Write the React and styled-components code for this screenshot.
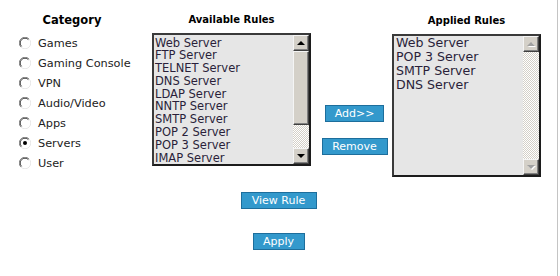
import React, { useState } from 'react';
import styled, { createGlobalStyle } from 'styled-components';

const GlobalStyle = createGlobalStyle`
  html, body {
    margin: 0;
    padding: 0;
    background: #fff;
  }
  body {
    font-family: "DejaVu Sans", Verdana, sans-serif;
    color: #222;
  }
`;

const Page = styled.div`
  width: 558px;
  height: 276px;
  box-sizing: border-box;
  border-right: 1px solid #c4c4c4;
`;

const TopRow = styled.div`
  display: flex;
  align-items: flex-start;
`;

const Column = styled.div`
  width: ${p => p.$width}px;
  margin-left: ${p => p.$left || 0}px;
  margin-top: ${p => p.$top || 0}px;
`;

const Header = styled.div`
  padding-top: 13px;
  height: 20px;
  line-height: 14px;
  text-align: center;
  font-weight: bold;
  font-size: ${p => p.$size}px;
  color: #000;
`;

const RadioList = styled.div`
  display: flex;
  flex-direction: column;
  padding-left: 19px;
`;

const RadioRow = styled.label`
  display: flex;
  align-items: center;
  gap: 7px;
  height: 20px;
  font-size: 11.3px;
  color: #222;
  cursor: pointer;
`;

const RadioIcon = ({ checked }) => (
  <svg width="12" height="12" viewBox="0 0 12 12">
    <circle cx="6" cy="6" r="5.5" fill="#fff" />
    <path d="M1.9 10.1 A5.5 5.5 0 0 1 10.1 1.9" fill="none" stroke="#8a8a8a" strokeWidth="1" />
    <path d="M2.6 9.4 A4.5 4.5 0 0 1 9.4 2.6" fill="none" stroke="#404040" strokeWidth="1" />
    <path d="M10.1 1.9 A5.5 5.5 0 0 1 1.9 10.1" fill="none" stroke="#e8e8e8" strokeWidth="1" />
    {checked && <circle cx="6" cy="6" r="2" fill="#000" />}
  </svg>
);

const ListBox = styled.div`
  display: flex;
  height: ${p => p.$height}px;
  box-sizing: border-box;
  border: 2px solid;
  border-color: #3a3a3a #1c1c1c #1c1c1c #3a3a3a;
  background: #e6e6e6;
`;

const Items = styled.div`
  flex: 1;
  overflow: hidden;
  padding: ${p => p.$pad};
  font-size: ${p => p.$size}px;
  line-height: ${p => p.$line}px;
  color: #2a1f3a;
  white-space: nowrap;
`;

const ScrollBar = styled.div`
  width: 16px;
  display: flex;
  flex-direction: column;
  background: repeating-conic-gradient(#d4d0c8 0 25%, #fff 0 50%) 0 0 / 2px 2px;
`;

const ScrollButton = styled.div`
  height: 16px;
  box-sizing: border-box;
  display: flex;
  align-items: center;
  justify-content: center;
  background: #d4d0c8;
  border: 1px solid;
  border-color: #f4f4f4 #404040 #404040 #f4f4f4;
  box-shadow: inset -1px -1px 0 #808080;
`;

const Thumb = styled.div`
  height: ${p => p.$height}px;
  box-sizing: border-box;
  background: #d4d0c8;
  border: 1px solid;
  border-color: #f4f4f4 #404040 #404040 #f4f4f4;
  box-shadow: inset -1px -1px 0 #808080;
`;

const Arrow = styled.span`
  width: 0;
  height: 0;
  border-left: 4px solid transparent;
  border-right: 4px solid transparent;
  ${p => (p.$down ? 'border-top' : 'border-bottom')}: 4px solid ${p => (p.$disabled ? '#a0a0a0' : '#000')};
  filter: ${p => (p.$disabled ? 'drop-shadow(1px 1px 0 #fff)' : 'none')};
`;

const Spacer = styled.div`
  flex: 1;
`;

const Middle = styled.div`
  width: 81px;
  padding-top: 105px;
  padding-left: 6px;
  box-sizing: border-box;
  display: flex;
  flex-direction: column;
  align-items: center;
  gap: 16px;
`;

const Button = styled.button`
  width: ${p => p.$width}px;
  height: 17px;
  padding: 0;
  box-sizing: border-box;
  border: 1px solid #1d6e9c;
  background: #3399cc;
  color: #fff;
  font-family: "DejaVu Sans", Verdana, sans-serif;
  font-size: 11px;
  line-height: 15px;
  cursor: pointer;
`;

const CenterRow = styled.div`
  display: flex;
  justify-content: center;
  margin-top: ${p => p.$top}px;
`;

const categories = ['Games', 'Gaming Console', 'VPN', 'Audio/Video', 'Apps', 'Servers', 'User'];

const available = [
  'Web Server', 'FTP Server', 'TELNET Server', 'DNS Server', 'LDAP Server', 'NNTP Server',
  'SMTP Server', 'POP 2 Server', 'POP 3 Server', 'IMAP Server',
];

const applied = ['Web Server', 'POP 3 Server', 'SMTP Server', 'DNS Server'];

export default function App() {
  const [category, setCategory] = useState('Servers');

  return (
    <Page>
      <GlobalStyle />
      <TopRow>
        <Column $width={144}>
          <Header $size={11.5}>Category</Header>
          <RadioList>
            {categories.map(c => (
              <RadioRow key={c} onClick={() => setCategory(c)}>
                <RadioIcon checked={category === c} />
                {c}
              </RadioRow>
            ))}
          </RadioList>
        </Column>

        <Column $width={159} $left={8}>
          <Header $size={10}>Available Rules</Header>
          <ListBox $height={133}>
            <Items $size={11.5} $line={12.8} $pad="1.5px 0 0 1px">
              {available.map(r => <div key={r}>{r}</div>)}
            </Items>
            <ScrollBar>
              <ScrollButton><Arrow /></ScrollButton>
              <Thumb $height={74} />
              <Spacer />
              <ScrollButton><Arrow $down /></ScrollButton>
            </ScrollBar>
          </ListBox>
        </Column>

        <Middle>
          <Button $width={59}>Add&gt;&gt;</Button>
          <Button $width={66}>Remove</Button>
        </Middle>

        <Column $width={149} $top={1}>
          <Header $size={10}>Applied Rules</Header>
          <ListBox $height={143}>
            <Items $size={12.6} $line={14} $pad="0 0 0 2px">
              {applied.map(r => <div key={r}>{r}</div>)}
            </Items>
            <ScrollBar>
              <ScrollButton><Arrow $disabled /></ScrollButton>
              <Spacer />
              <ScrollButton><Arrow $down $disabled /></ScrollButton>
            </ScrollBar>
          </ListBox>
        </Column>
      </TopRow>

      <CenterRow $top={15}>
        <Button $width={76}>View Rule</Button>
      </CenterRow>
      <CenterRow $top={24}>
        <Button $width={52}>Apply</Button>
      </CenterRow>
    </Page>
  );
}
